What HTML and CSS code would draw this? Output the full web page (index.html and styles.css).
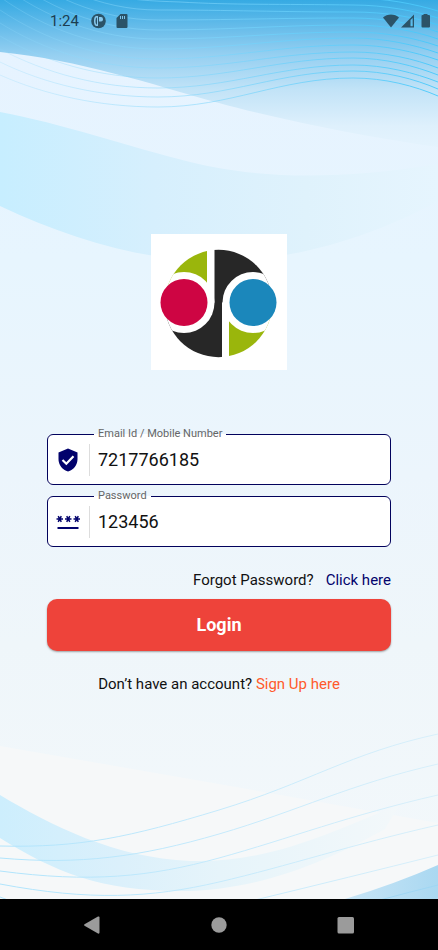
FILE: index.html
```html
<!DOCTYPE html>
<html lang="en">
<head>
<meta charset="utf-8">
<meta name="viewport" content="width=device-width, initial-scale=1">
<title>Login</title>
<link rel="stylesheet" href="styles.css">
</head>
<body>
<div class="screen">
  <svg class="backdrop" viewBox="0 0 438 899" preserveAspectRatio="none" aria-hidden="true">
    <defs>
      <linearGradient id="sky" x1="0" y1="0" x2="0" y2="1">
        <stop offset="0" stop-color="#36aae3"/>
        <stop offset=".03" stop-color="#66bcea"/>
        <stop offset=".06" stop-color="#94cff1"/>
        <stop offset=".1" stop-color="#c2e3f7"/>
        <stop offset=".14" stop-color="#def0fc"/>
        <stop offset=".17" stop-color="#e6f4fe"/>
        <stop offset="1" stop-color="#e6f4fe"/>
      </linearGradient>
      <linearGradient id="haze" gradientUnits="userSpaceOnUse" x1="0" y1="50" x2="0" y2="899">
        <stop offset="0" stop-color="#e6f3ff"/>
        <stop offset=".25" stop-color="#e7f5fe"/>
        <stop offset=".5" stop-color="#ecf5fc"/>
        <stop offset=".7" stop-color="#eff6fa"/>
        <stop offset="1" stop-color="#f3f8fb"/>
      </linearGradient>
      <linearGradient id="ribbon" x1="0" y1="0" x2="1" y2="0">
        <stop offset="0" stop-color="#c7eeff"/>
        <stop offset=".35" stop-color="#d6effd"/>
        <stop offset=".7" stop-color="#dff2fc"/>
        <stop offset="1" stop-color="#e6f5fe"/>
      </linearGradient>
      <linearGradient id="ribbon-low" x1="0" y1="0" x2="1" y2="0">
        <stop offset="0" stop-color="#cdeefd"/>
        <stop offset=".3" stop-color="#dbf0fb"/>
        <stop offset=".55" stop-color="#e6f4fa"/>
        <stop offset="1" stop-color="#f3f8fa"/>
      </linearGradient>
      <linearGradient id="corner" x1="0" y1="0" x2="1" y2="0">
        <stop offset="0" stop-color="#c8e5f6"/>
        <stop offset="1" stop-color="#aad8f1"/>
      </linearGradient>
      <linearGradient id="thread" gradientUnits="userSpaceOnUse" x1="0" y1="0" x2="438" y2="0">
        <stop offset="0" stop-color="#8fd9fa" stop-opacity=".25"/>
        <stop offset=".4" stop-color="#86d8fc" stop-opacity=".55"/>
        <stop offset="1" stop-color="#45c8fb" stop-opacity=".9"/>
      </linearGradient>
      <linearGradient id="thread-low" gradientUnits="userSpaceOnUse" x1="0" y1="0" x2="438" y2="0">
        <stop offset="0" stop-color="#b0e4fc"/>
        <stop offset=".5" stop-color="#c5eafc"/>
        <stop offset="1" stop-color="#d8effa"/>
      </linearGradient>
    </defs>
    <rect width="438" height="899" fill="url(#sky)"/>
    <path fill="url(#haze)" d="M0 52C80 60 150 84 219 103S380 139 438 147V899H0Z"/>
    <path fill="url(#ribbon)" d="M0 112C60 123 130 147 190 162S330 182 438 164V201C390 228 330 248 280 256C180 272 90 248 0 206Z"/>
    <path fill="#f6f8f9" d="M0 746L219 784L438 823V899H0Z"/>
    <path fill="url(#ribbon-low)" d="M0 795C50 825 115 858 190 861C270 863 330 833 400 804L385 829C330 860 260 891 180 891C100 891 55 872 0 838Z"/>
    <path fill="url(#corner)" d="M345 899Q395 884 438 865V899Z"/>
    <g fill="none" stroke="url(#thread)">
      <path d="M0 75C45 95 100 107 158 107C230 107 280 78 353 78C385 78 415 86 438 96"/>
      <path d="M0 62C45 84 100 97 158 97C230 97 280 71 353 71C385 71 415 79 438 89"/>
      <path d="M0 49C45 73 100 88 158 88C230 88 280 65 353 65C385 65 415 73 438 82"/>
      <path d="M0 36C45 62 100 78 158 78C230 78 280 58 353 58C385 58 415 66 438 75"/>
      <path d="M0 23C45 51 100 68 158 68C230 68 280 52 353 52C385 52 415 59 438 68"/>
      <path d="M0 10C45 40 100 59 158 59C230 59 280 45 353 45C385 45 415 52 438 60"/>
      <path d="M0 -3C45 29 100 49 158 49C230 49 280 38 353 38C385 38 415 45 438 53"/>
      <path d="M0 -16C45 18 100 39 158 39C230 39 280 32 353 32C385 32 415 38 438 46"/>
      <path d="M0 -29C45 7 100 30 158 30C230 30 280 25 353 25C385 25 415 31 438 39"/>
      <path d="M0 -42C45 -4 100 20 158 20C230 20 280 18 353 18C385 18 415 24 438 32"/>
      <path d="M0 -55C45 -15 100 10 158 10C230 10 280 12 353 12C385 12 415 17 438 25"/>
      <path d="M100 -6C130 0 150 1 180 2C230 5 280 4 353 5C385 5 415 11 438 18"/>
      <path d="M353 -2C385 -2 415 4 438 11"/>
    </g>
    <g fill="none" stroke="url(#thread-low)">
      <path d="M0 846C80 848 130 837 219 810S350 753 438 734"/>
      <path d="M0 858C80 865 140 857 219 834S350 784 438 764"/>
      <path d="M0 871C90 883 150 877 219 858S350 815 438 795"/>
      <path d="M0 884C90 901 150 898 219 882S350 845 438 825"/>
      <path d="M0 897L8 900M255 900Q350 877 438 855"/>
      <path stroke="#9fd6f3" d="M380 900Q410 892 438 885"/>
    </g>
  </svg>

  <header class="status">
    <span class="time">1:24</span>
    <span class="notices">
      <svg width="15" height="16" viewBox="0 0 15 16" aria-hidden="true">
        <circle cx="7.500" cy="8" r="7.300" fill="#2b5368"/>
        <path fill="#86c8ed" d="M7 3H5.500Q3 3 3 8T5.500 13H7Z"/>
        <path fill="#2b5368" d="M6 4.500V11.500H5.500Q4.500 11 4.500 8T5.500 4.500Z"/>
        <path fill="#86c8ed" d="M8 4H10Q12 4 12 6.200T10 8.400H8Z"/>
      </svg>
      <svg width="12" height="14" viewBox="0 0 12 14" aria-hidden="true">
        <path fill="#2b5368" d="M4.500 0H10.500Q11.500 0 11.500 1V13Q11.500 14 10.500 14H1.500Q.5 14 .5 13V4Z"/>
        <path stroke="#7fc4eb" stroke-width="1" d="M4.500 2V5M6.500 2V5M8.500 2V5"/>
      </svg>
    </span>
    <svg class="signals" width="48" height="14" viewBox="0 0 48 14" aria-hidden="true">
      <g fill="#2b5368">
        <path d="M8 13.500L0 3.500C4 -.5 12 -.5 16 3.500Z"/>
        <path fill-rule="evenodd" d="M31 .5V13.500H18ZM27.500 6V12.300H29.700V4Z"/>
        <path d="M40.500 0H44.500V1H46Q47 1 47 2V12.500Q47 13.500 46 13.500H39.500Q38.500 13.500 38.500 12.500V2Q38.500 1 39.500 1H40.500Z"/>
      </g>
    </svg>
  </header>

  <main class="content">
    <svg class="logo" viewBox="0 0 136 136" role="img" aria-label="dp logo">
      <defs><clipPath id="disc"><circle cx="67.500" cy="69.500" r="53.700"/></clipPath></defs>
      <rect width="136" height="136" fill="#fff"/>
      <g clip-path="url(#disc)">
        <path fill="#9ab60c" d="M56 0V60H0V0Z"/>
        <path fill="#9ab60c" d="M78 80H136V136H78Z"/>
        <path fill="#272727" d="M63.500 0H136V68.500H71V136H0V68.500H63.500Z"/>
        <circle cx="33" cy="68.500" r="30.500" fill="#fff"/>
        <circle cx="102" cy="68.500" r="30.500" fill="#fff"/>
      </g>
      <circle cx="33" cy="68.500" r="23.500" fill="#ce0543"/>
      <circle cx="102" cy="68.500" r="23.500" fill="#1b87bb"/>
    </svg>

    <form class="form">
      <fieldset class="field">
        <legend><label for="user">Email Id / Mobile Number</label></legend>
        <div class="row">
          <span class="icon">
            <svg width="20" height="24" viewBox="0 0 20 24" aria-hidden="true">
              <path fill="#02026c" d="M10 .5L19.500 4.500V11C19.500 17 15.500 22 10 23.500C4.500 22 .5 17 .5 11V4.500Z"/>
              <path fill="none" stroke="#fff" stroke-width="2.200" d="M4.500 12L8.300 15.700L15.500 8.200"/>
            </svg>
          </span>
          <input id="user" type="text" value="7217766185">
        </div>
      </fieldset>
      <fieldset class="field">
        <legend><label for="pass">Password</label></legend>
        <div class="row">
          <span class="icon">
            <svg width="24" height="16" viewBox="0 0 24 16" aria-hidden="true">
              <g fill="none" stroke="#02026c" stroke-width="1.500">
                <path d="M.5 5H7M2.200 2.200L5.300 7.800M5.300 2.200L2.200 7.800"/>
                <path d="M9 5H15.500M10.700 2.200L13.800 7.800M13.800 2.200L10.700 7.800"/>
                <path d="M17.500 5H24M19.200 2.200L22.300 7.800M22.300 2.200L19.200 7.800"/>
                <path stroke-width="2" d="M1.500 14H22.500"/>
              </g>
            </svg>
          </span>
          <input id="pass" type="text" value="123456">
        </div>
      </fieldset>
      <p class="forgot">Forgot Password? <a href="#reset">Click here</a></p>
      <button class="login" type="submit">Login</button>
    </form>
    <p class="signup">Don’t have an account? <a href="#signup">Sign Up here</a></p>
  </main>
</div>

<nav class="navbar" aria-label="System">
  <button type="button" aria-label="Back"><svg width="18" height="18" viewBox="0 0 18 18"><path d="M15 .5Q16.500 0 16.500 1.500V16.500Q16.500 18 15 17.500L1.500 9.800Q.5 9 1.500 8.200Z"/></svg></button>
  <button type="button" aria-label="Home"><svg width="18" height="18" viewBox="0 0 18 18"><circle cx="9" cy="9" r="7.700"/></svg></button>
  <button type="button" aria-label="Recents"><svg width="18" height="18" viewBox="0 0 18 18"><rect x=".5" y="1" width="16.500" height="16.500" rx="1.500"/></svg></button>
</nav>
</body>
</html>
```

FILE: styles.css
```css
* {
  box-sizing: border-box;
}

body {
  margin: 0;
  min-height: 100vh;
  display: flex;
  flex-direction: column;
  font-family: Roboto, "Liberation Sans", sans-serif;
  color: #111;
  background: #000;
}

.screen {
  position: relative;
  flex: 1;
  display: flex;
  flex-direction: column;
  background: #eef6fb;
}

.backdrop {
  position: absolute;
  inset: 0;
  width: 100%;
  height: 100%;
}

.status {
  position: relative;
  display: flex;
  align-items: center;
  height: 42px;
  padding: 0 7px 0 50px;
  gap: 12px;
}

.notices {
  display: flex;
  align-items: center;
  gap: 10px;
}

.time {
  font-size: 15px;
  line-height: 20px;
  color: #1c3d50;
}

.signals {
  margin-left: auto;
}

.content {
  position: relative;
  flex: 1;
  display: flex;
  flex-direction: column;
  align-items: center;
  padding: 192px 47px 40px;
}

.logo {
  display: block;
  width: 136px;
  margin-bottom: 57px;
}

.form {
  width: 100%;
}

.field {
  min-width: 0;
  margin: 0 0 4px;
  padding: 0;
  border: 1px solid #02025c;
  border-radius: 6px;
  background: #fff;
}

.field legend {
  margin-left: 46px;
  padding: 0 4px;
  font-size: 11px;
  line-height: 14px;
  color: #666;
}

.row {
  display: flex;
  align-items: center;
  height: 43px;
  padding-bottom: 6px;
}

.icon {
  display: flex;
  justify-content: center;
  align-items: center;
  width: 42px;
  height: 32px;
  padding-right: 2px;
  border-right: 1px solid #ddd;
}

.field input {
  flex: 1;
  min-width: 0;
  padding: 0 8px;
  border: 0;
  outline: 0;
  background: transparent;
  font: 18px/24px Roboto, "Liberation Sans", sans-serif;
  color: #111;
}

a {
  text-decoration: none;
}

.forgot {
  display: flex;
  justify-content: flex-end;
  gap: 12px;
  margin: 24px 0 10px;
  font-size: 15px;
  line-height: 18px;
}

.forgot a {
  color: #02026c;
}

.login {
  display: block;
  width: 100%;
  height: 52px;
  border: 0;
  border-radius: 10px;
  background: #ee433a;
  box-shadow: 0 1px 2px rgba(0, 0, 0, 0.35);
  font: 700 18px/24px Roboto, "Liberation Sans", sans-serif;
  color: #fff;
}

.signup {
  margin: 24px 0 0;
  font-size: 15px;
  line-height: 18px;
}

.signup a {
  color: #ff5a2b;
}

.navbar {
  display: flex;
  justify-content: space-around;
  align-items: center;
  height: 51px;
  padding: 0 28px;
  background: #000;
}

.navbar button {
  display: flex;
  padding: 0;
  border: 0;
  background: none;
}

.navbar svg {
  fill: #9b9b9b;
}
```
